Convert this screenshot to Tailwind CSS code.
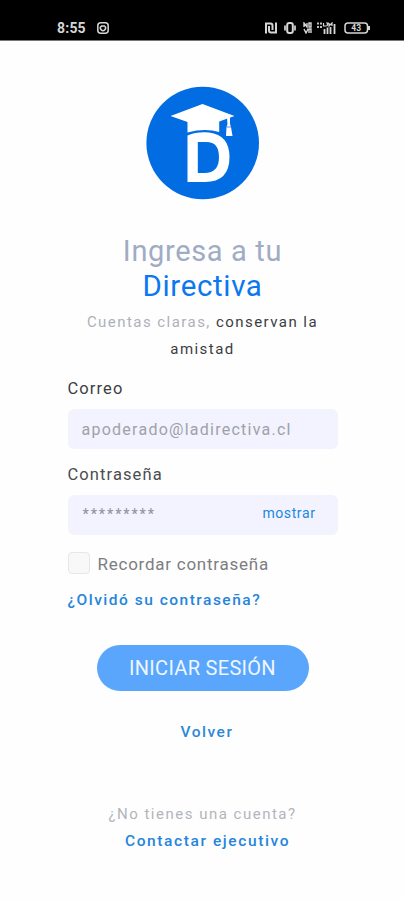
<!DOCTYPE html>
<html lang="es">
<head>
<meta charset="utf-8">
<meta name="viewport" content="width=device-width, initial-scale=1">
<title>Directiva</title>
<script src="https://cdn.jsdelivr.net/npm/@tailwindcss/browser@4"></script>
</head>
<body class="bg-white">
<div class="flex h-[900px] w-[404px] flex-col overflow-hidden bg-[#fefefe] font-['Roboto','Liberation_Sans',sans-serif]">
  <header class="flex h-[41px] shrink-0 items-end border-b border-[#777] bg-black pr-[33px] pb-[3px] pl-[57px] text-[#d6d6d6]">
    <span class="w-[40px] text-[14px] leading-[18px] font-bold tracking-[0.2px]">8:55</span>
    <svg class="mb-[3px]" width="12" height="12" viewBox="0 0 12 12" fill="none" stroke="currentColor" stroke-width="1.5"><rect x=".8" y=".8" width="10.4" height="10.4" rx="3"/><path d="M4 4.300a2.600 2.600 0 1 0 4 0M4 4h4"/></svg>
    <div class="mb-[3px] ml-auto flex items-center">
      <svg width="12" height="12" viewBox="0 0 12 12" fill="none" stroke="currentColor" stroke-width="2"><path d="M1 11.500V1.500h4.500q2 0 2 2v4.500M4 4v4.500q0 2 2 2h5V.5"/></svg>
      <svg class="ml-[7px]" width="12" height="12" viewBox="0 0 12 12" fill="none" stroke="currentColor" stroke-width="1.7"><rect x="3.200" y="1" width="5.600" height="10" rx="2" stroke-width="2"/><path d="M1 3.500v5M11 3.500v5"/></svg>
      <svg class="ml-[7px]" width="9" height="12" viewBox="0 0 9 12" fill="none" stroke="currentColor" stroke-width="1.4"><path d="M1 5V1l3 4V1M6 1h2v4H6zM1 7l2 4 2-4M6 11V7h2v4"/></svg>
      <svg class="ml-[5px]" width="19" height="12" viewBox="0 0 19 12" fill="none" stroke="currentColor" stroke-width="1.8"><path d="M1 .5v2M1 4v2M4 .5v2M4 4v2M7.500 7v5M10.500 5.500v6.500M13.500 5v7M17.500 2v10"/><path d="M6.500 1v3h3M9 1h2l-1 3M12 1v3l3-3v3" stroke-width="1.200"/></svg>
      <svg class="ml-[8px]" width="27" height="12" viewBox="0 0 27 12" fill="none" stroke="currentColor" stroke-width="1.5"><rect x="1" y="1" width="22.500" height="10" rx="3"/><path d="M25 4v4" stroke-width="2"/><text x="12.200" y="9" text-anchor="middle" font-size="8.5" font-weight="700" fill="currentColor" stroke="none">43</text></svg>
    </div>
  </header>

  <main class="flex flex-col items-center pt-[45px] pl-px">
    <svg class="shrink-0" width="114" height="114" viewBox="0 0 114 114">
      <circle cx="56.700" cy="57" r="56.3" fill="#026de3"/>
      <g fill="#fff">
        <path d="M24.500 30 56.500 18l32 12-15.300 5.500V46Q59 42 41.500 46.500V36z"/>
        <path fill-rule="evenodd" d="M41.500 49.500Q51 45.500 63 46.500 83.500 49 83.500 71 83.500 96 59 96H41.500zM51.800 56V87H58.500Q73 87 73 71 73 56 60.500 56z"/>
        <path d="M81 32.500l3-1.500v7l1 3 1.500 9h-6.500l.5-9 1-3z"/>
      </g>
      <path d="M80.500 41h4.500" stroke="#026de3" stroke-width=".7"/>
    </svg>

    <h1 class="mt-[34px] text-center font-normal">
      <span class="block text-[29px] leading-[35px] tracking-[0.65px] text-[#a0acc4]">Ingresa a tu</span>
      <span class="block text-[29.500px] leading-[35px] tracking-[0.65px] text-[#0b78f0]">Directiva</span>
    </h1>
    <p class="mt-[5px] text-center text-[15px] leading-[27px] tracking-[1.45px] text-[#adb1ba]">Cuentas claras, <span class="text-[#3c3d41]">conservan la<br>amistad</span></p>

    <form class="mt-[14px] flex w-[270px] flex-col">
      <label class="text-[16.5px] leading-[24px] tracking-[1.1px] text-[#3c3e42]">Correo</label>
      <div class="mt-[8px] flex h-[40px] items-center rounded-[6px] bg-[#f2f3fe] px-[14px] pt-px text-[16px] tracking-[1.25px] text-[#a0a1a9]">apoderado@ladirectiva.cl</div>
      <label class="mt-[14px] text-[16.5px] leading-[24px] tracking-[1.1px] text-[#4a4c50]">Contraseña</label>
      <div class="mt-[8px] flex h-[40px] items-center justify-between rounded-[6px] bg-[#f2f3fe] pr-[22px] pl-[15px]">
        <span class="pb-[2px] text-[14px] leading-none font-medium tracking-[1.95px] text-[#94959f]">*********</span>
        <span class="pb-[4px] text-[14px] leading-[20px] tracking-[0.6px] text-[#2087df]">mostrar</span>
      </div>
      <div class="mt-[16px] flex h-[23px] items-center gap-[8px]">
        <span class="size-[22px] rounded-[4px] border border-[#e7e7e7] bg-[#f8f8f8]"></span>
        <span class="pt-[2px] text-[17px] leading-[22px] tracking-[0.75px] text-[#7c7d80]">Recordar contraseña</span>
      </div>
      <a class="mt-[15px] text-[15.5px] leading-[22px] font-medium tracking-[1.5px] text-[#2585dc]">¿Olvidó su contraseña?</a>
      <button type="button" class="mt-[34px] h-[46px] w-[212px] self-center rounded-full bg-[#5ba6fd] text-[20px] tracking-[0.3px] text-[#eef6ff]">INICIAR SESIÓN</button>
    </form>

    <a class="mt-[30px] pl-[9px] text-[15.5px] leading-[22px] font-medium tracking-[1.5px] text-[#2d88d4]">Volver</a>
    <p class="mt-[58px] text-center text-[15px] leading-[27px] tracking-[1.5px] text-[#b3b5bc]">¿No tienes una cuenta?<br><a class="pl-[10px] text-[15.5px] font-medium tracking-[1.6px] text-[#2585dc]">Contactar ejecutivo</a></p>
  </main>
</div>
</body>
</html>
